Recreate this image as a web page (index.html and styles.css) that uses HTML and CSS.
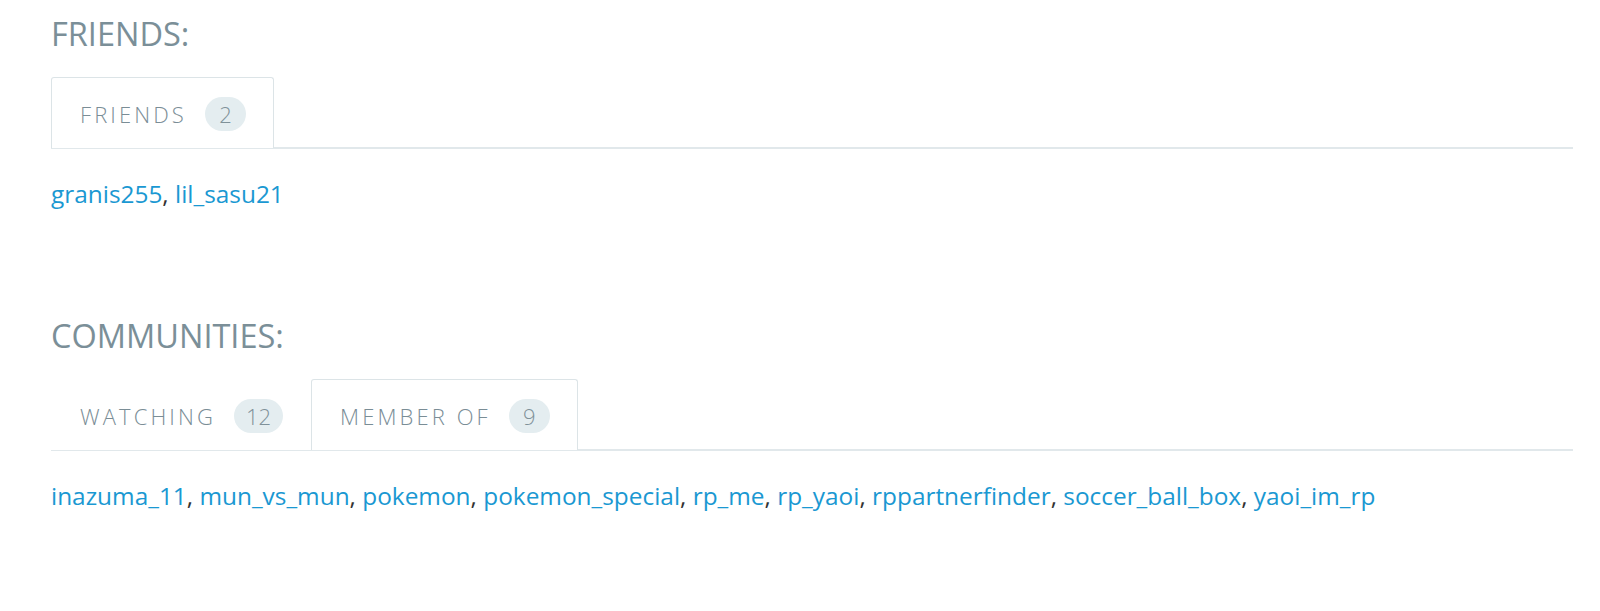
FILE: index.html
```html
<!DOCTYPE html>
<html>
<head>
<meta charset="utf-8">
<link rel="stylesheet" href="styles.css">
</head>
<body>
<div class="page">
  <section class="section">
    <h2 class="heading">FRIENDS:</h2>
    <div class="tabs">
      <div class="tab active"><span class="label">FRIENDS</span><span class="badge">2</span></div>
    </div>
    <p class="links"><a href="#">granis255</a>, <a href="#">lil_sasu21</a></p>
  </section>
  <section class="section second">
    <h2 class="heading">COMMUNITIES:</h2>
    <div class="tabs">
      <div class="tab"><span class="label">WATCHING</span><span class="badge">12</span></div>
      <div class="tab active"><span class="label">MEMBER OF</span><span class="badge">9</span></div>
    </div>
    <p class="links"><a href="#">inazuma_11</a>, <a href="#">mun_vs_mun</a>, <a href="#">pokemon</a>, <a href="#">pokemon_special</a>, <a href="#">rp_me</a>, <a href="#">rp_yaoi</a>, <a href="#">rppartnerfinder</a>, <a href="#">soccer_ball_box</a>, <a href="#">yaoi_im_rp</a></p>
  </section>
</div>
</body>
</html>
```
FILE: styles.css
```css
html, body {
  margin: 0;
  padding: 0;
  background: #fff;
}
body {
  font-family: "Open Sans", "Liberation Sans", sans-serif;
  color: #333;
}
.page {
  padding: 14px 27px 0 51px;
}
.section {
  margin: 0;
}
.second {
  margin-top: 106px;
}
.heading {
  margin: 0;
  font-size: 32.5px;
  line-height: 40px;
  font-weight: 400;
  color: #7b8f98;
}
.tabs {
  display: flex;
  margin-top: 23px;
  border-bottom: 2px solid #e1e8eb;
  height: 70px;
}
.tab {
  display: flex;
  align-items: center;
  gap: 18px;
  padding: 1px 27px 0 28px;
  height: 71px;
  box-sizing: border-box;
  border: 1px solid transparent;
  border-bottom: none;
  border-radius: 3px 3px 0 0;
  background: #fff;
}
.tab.active {
  border-color: #dce4e7;
}
.label {
  font-size: 22px;
  font-weight: 300;
  letter-spacing: 3.1px;
  color: #7a8d96;
}
.badge {
  display: inline-flex;
  align-items: center;
  justify-content: center;
  min-width: 41px;
  height: 34px;
  padding: 0 12px;
  box-sizing: border-box;
  border-radius: 17px;
  background: #e4edf0;
  color: #7f9199;
  font-size: 22px;
  font-weight: 300;
}
.links {
  margin: 29px 0 0;
  font-size: 24.4px;
  line-height: 32px;
  color: #333;
}
.links a {
  color: #1a98d2;
  text-decoration: none;
}
```
